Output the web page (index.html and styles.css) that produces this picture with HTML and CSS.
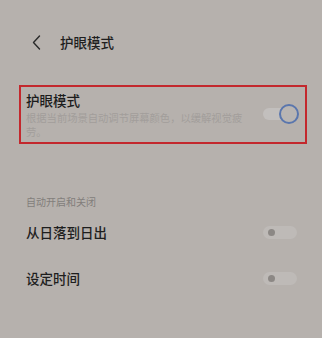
FILE: index.html
```html
<!DOCTYPE html>
<html lang="zh">
<head>
<meta charset="utf-8">
<link rel="stylesheet" href="styles.css">
</head>
<body>
<div class="page">
  <header class="header">
    <svg class="back" width="9" height="15" viewBox="0 0 9 15"><path d="M7.5 1 L1.5 7.5 L7.5 14" fill="none" stroke="#2a2a2a" stroke-width="1.4" stroke-linecap="round" stroke-linejoin="round"/></svg>
    <span class="header-title">护眼模式</span>
  </header>

  <section class="eye-box">
    <div class="eye-text">
      <div class="eye-title">护眼模式</div>
      <div class="eye-desc">根据当前场景自动调节屏幕颜色，以缓解视觉疲劳。</div>
    </div>
    <div class="switch-on"><span class="knob-on"></span></div>
  </section>

  <div class="section-label">自动开启和关闭</div>

  <div class="row">
    <span class="row-title">从日落到日出</span>
    <span class="switch-off"><span class="knob-off"></span></span>
  </div>
  <div class="row">
    <span class="row-title">设定时间</span>
    <span class="switch-off"><span class="knob-off"></span></span>
  </div>
</div>
</body>
</html>
```

FILE: styles.css
```css
html, body {
  margin: 0;
  padding: 0;
  background: #b6b1ad;
}
body {
  font-family: "Noto Sans CJK SC", "Noto Sans", sans-serif;
  width: 322px;
  height: 338px;
  overflow: hidden;
}
.page {
  display: flex;
  flex-direction: column;
}
.header {
  display: flex;
  align-items: center;
  height: 20px;
  margin-top: 32px;
  padding-left: 32px;
}
.back {
  display: block;
}
.header-title {
  margin-left: 19px;
  font-size: 13.5px;
  line-height: 20px;
  color: #1f1f1f;
  font-weight: 500;
}
.eye-box {
  margin: 33px 15px 0 19px;
  border: 2px solid #c3282d;
  padding: 5px 6px 4px 5px;
  display: flex;
  align-items: center;
  justify-content: space-between;
}
.eye-title {
  font-size: 13.5px;
  line-height: 17px;
  color: #1c1c1c;
  font-weight: 500;
}
.eye-desc {
  width: 220px;
  margin-top: 2px;
  font-size: 10.3px;
  line-height: 13.5px;
  color: #a29e9b;
}
.switch-on {
  position: relative;
  width: 36px;
  height: 20px;
  margin-bottom: 3px;
  display: flex;
  align-items: center;
}
.switch-on::before {
  content: "";
  display: block;
  width: 28px;
  height: 12px;
  border-radius: 6px;
  background: #c2bfbd;
}
.knob-on {
  position: absolute;
  right: 0;
  top: 0;
  width: 16px;
  height: 16px;
  border-radius: 50%;
  border: 2px solid #5a76ad;
  background: #b9b5b2;
}
.section-label {
  margin-top: 51px;
  padding-left: 26px;
  font-size: 10px;
  line-height: 14px;
  color: #827e7b;
}
.row {
  display: flex;
  align-items: center;
  justify-content: space-between;
  height: 46px;
  padding: 0 25px 0 26px;
}
.row-title {
  font-size: 13.5px;
  color: #1e1e1e;
  font-weight: 500;
}
.switch-off {
  display: flex;
  align-items: center;
  width: 34px;
  height: 13px;
  border-radius: 7px;
  background: #bebab7;
}
.knob-off {
  width: 7px;
  height: 7px;
  border-radius: 50%;
  margin-left: 5px;
  background: #8c8885;
}
```
